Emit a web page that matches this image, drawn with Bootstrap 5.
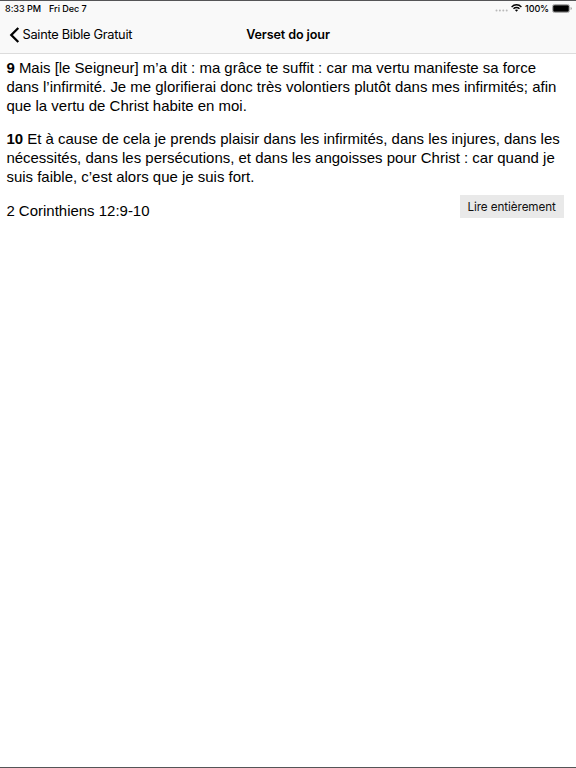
<!DOCTYPE html>
<html lang="fr">
<head>
<meta charset="utf-8">
<meta name="viewport" content="width=device-width, initial-scale=1">
<title>Verset do jour</title>
<link href="https://cdn.jsdelivr.net/npm/bootstrap@5.3.0/dist/css/bootstrap.min.css" rel="stylesheet">
<style>
body { font-family: "Liberation Sans", Arial, sans-serif; color: #000; background: #fff; }
.screen { height: 768px; border-top: 1px solid #555557; border-bottom: 1px solid #555557; }
.top-chrome { height: 53px; background: #f9f9f9; border-bottom: 1px solid #dcdcdc; font-family: Inter, Roboto, sans-serif; }
.status { height: 14px; padding: 0 4px 0 5px; font-size: 9.1px; line-height: 15px; font-weight: 500; }
.status-time, .status-date { letter-spacing: -.06px; }
.status-date { margin-left: 8px; }
.signal { margin: 4px 3.5px 0 0; }
.wifi { margin-right: 3px; }
.percent { letter-spacing: -.15px; }
.battery { margin-left: 3px; }
.titlebar { height: 39px; display: grid; grid-template-columns: 1fr auto 1fr; align-items: center; font-size: 12.8px; line-height: 21px; }
.back { padding-left: 9px; color: #000; }
.back-label { margin-left: 2.5px; letter-spacing: -.28px; }
.page-title { font-size: 12.6px; font-weight: 600; letter-spacing: -.12px; }
.verses { padding: 5px 6.4px 0 6.4px; font-size: 14.98px; line-height: 18.75px; }
.verses p { margin-bottom: 15px; white-space: nowrap; }
.reading-btn { width: 104px; height: 23px; margin: -7px 6px 0 0; padding: 1px 0 0; border: 0; border-radius: 0; background: #e9e9e9; font-family: Inter, Roboto, sans-serif; font-size: 11.7px; letter-spacing: -.08px; line-height: 22px; color: #111; }
</style>
</head>
<body>
<div class="screen d-flex flex-column overflow-hidden">
  <header class="top-chrome">
    <div class="status d-flex justify-content-between">
      <div class="d-flex"><span class="status-time">8:33 PM</span><span class="status-date">Fri Dec 7</span></div>
      <div class="d-flex align-items-center">
        <svg class="signal" width="13" height="4" viewBox="0 0 13 4" fill="#b9b9b9"><circle cx="1.5" cy="2.5" r="1"/><circle cx="4.9" cy="2.5" r="1"/><circle cx="8.3" cy="2.5" r="1"/><circle cx="11.7" cy="2.5" r="1"/></svg>
        <svg class="wifi" width="11" height="8" viewBox="0 0 11 8" fill="none" stroke="#000" stroke-width="1.4"><path d="M.6 2.9C3.4.1 7.6.1 10.4 2.9M2.5 4.8C4.2 3.1 6.8 3.1 8.5 4.8"/><path d="M5.5 7.7 3.9 6.1Q5.5 4.8 7.1 6.1Z" fill="#000" stroke="none"/></svg>
        <span class="percent">100%</span>
        <svg class="battery" width="20" height="9" viewBox="0 0 20 9"><rect x=".5" y=".5" width="17" height="8" rx="2" fill="#f9f9f9" stroke="#aaa"/><rect x="1.2" y="1.2" width="15.6" height="6.6" rx="1.1"/><path d="M18.6 3Q19.8 3.4 19.8 4.5T18.6 6Z" fill="#999"/></svg>
      </div>
    </div>
    <nav class="titlebar">
      <a class="back d-flex align-items-center text-decoration-none" href="#">
        <svg width="11" height="16" viewBox="0 0 11 16" fill="none" stroke="#000" stroke-width="2.3"><path d="M9.3 1 2.3 8l7 7"/></svg>
        <span class="back-label">Sainte Bible Gratuit</span>
      </a>
      <span class="page-title">Verset do jour</span>
      <span></span>
    </nav>
  </header>
  <main class="verses">
    <p><b>9</b> Mais [le Seigneur] m’a dit : ma grâce te suffit : car ma vertu manifeste sa force<br>dans l’infirmité. Je me glorifierai donc très volontiers plutôt dans mes infirmités; afin<br>que la vertu de Christ habite en moi.</p>
    <p><b>10</b> Et à cause de cela je prends plaisir dans les infirmités, dans les injures, dans les<br>nécessités, dans les persécutions, et dans les angoisses pour Christ : car quand je<br>suis faible, c’est alors que je suis fort.</p>
    <div class="d-flex justify-content-between align-items-start">
      <span>2 Corinthiens 12:9-10</span>
      <button class="btn reading-btn" type="button">Lire entièrement</button>
    </div>
  </main>
</div>
<script src="https://cdn.jsdelivr.net/npm/bootstrap@5.3.0/dist/js/bootstrap.bundle.min.js"></script>
</body>
</html>
